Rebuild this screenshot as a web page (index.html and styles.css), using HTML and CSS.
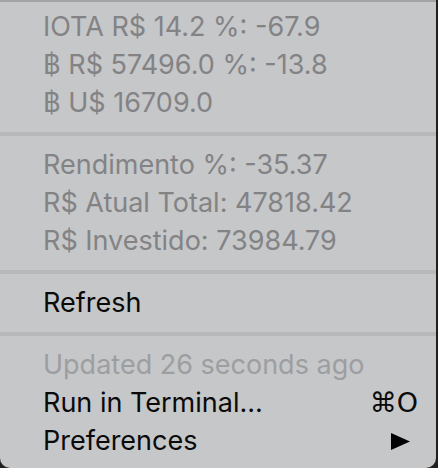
FILE: index.html
```html
<!DOCTYPE html>
<html>
<head>
<meta charset="utf-8">
<link rel="stylesheet" href="styles.css">
</head>
<body>
<div class="menu">
  <div class="item disabled">IOTA R$ 14.2 %: -67.9</div>
  <div class="item disabled">฿ R$ 57496.0 %: -13.8</div>
  <div class="item disabled">฿ U$ 16709.0</div>
  <div class="sep"></div>
  <div class="item disabled">Rendimento %: -35.37</div>
  <div class="item disabled">R$ Atual Total: 47818.42</div>
  <div class="item disabled">R$ Investido: 73984.79</div>
  <div class="sep"></div>
  <div class="item">Refresh</div>
  <div class="sep"></div>
  <div class="item faint">Updated 26 seconds ago</div>
  <div class="item"><span>Run in Terminal...</span><span class="shortcut">⌘O</span></div>
  <div class="item"><span>Preferences</span><svg class="arrow" width="19" height="17" viewBox="0 0 19 17"><polygon points="0,0 19,8.5 0,17" fill="#000"/></svg></div>
</div>
</body>
</html>
```
FILE: styles.css
```css
html, body {
  margin: 0;
  padding: 0;
  background: #1f1f1f;
}
.menu {
  width: 436px;
  height: 468px;
  background: #c6c7c9;
  border-top: 2px solid #a3a3a5;
  border-radius: 0 0 10px 10px;
  padding: 6px 0 8px 0;
  box-sizing: border-box;
  font-family: Inter, "Liberation Sans", sans-serif;
  font-size: 27px;
}
.item {
  height: 38px;
  line-height: 38px;
  padding: 0 18px 0 43px;
  display: flex;
  justify-content: space-between;
  align-items: center;
  color: #0a0a0a;
  white-space: nowrap;
}
.item.disabled {
  color: #838385;
}
.item.faint {
  color: #9d9ea0;
}
.sep {
  height: 4px;
  margin: 10px 0;
  background: #b7b8ba;
}
.shortcut {
  font-family: "DejaVu Sans", "Liberation Sans", sans-serif;
}
.arrow {
  margin-right: 8px;
}
```
